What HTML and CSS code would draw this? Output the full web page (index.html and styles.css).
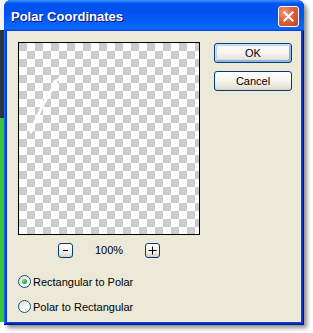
FILE: index.html
```html
<!DOCTYPE html>
<html>
<head>
<meta charset="utf-8">
<link rel="stylesheet" href="styles.css">
</head>
<body>
<div class="desk">
  <div class="window">
    <div class="titlebar">
      <span class="title">Polar Coordinates</span>
      <div class="close">
        <svg width="21" height="21" viewBox="0 0 21 21"><path d="M6.5 6.5 L14.5 14.5 M14.5 6.5 L6.5 14.5" stroke="#fff" stroke-width="2.2" stroke-linecap="square"/></svg>
      </div>
    </div>
    <div class="body">
      <div class="main">
        <div class="left">
          <div class="preview">
            <svg width="180" height="191" viewBox="0 0 180 191">
              <path d="M12 89 Q22 62 37 40" fill="none" stroke="#fff" stroke-width="2.8" stroke-linecap="round"/>
              <path d="M35 39 L43 34" fill="none" stroke="#fff" stroke-width="2.6" stroke-linecap="round"/>
            </svg>
          </div>
          <div class="zoom">
            <div class="zbtn"><svg width="13" height="12" viewBox="0 0 13 12"><path d="M4 6.5 H9" stroke="#000" stroke-width="1"/></svg></div>
            <span class="pct">100%</span>
            <div class="zbtn"><svg width="13" height="12" viewBox="0 0 13 12"><path d="M2.5 6.5 H10.5 M6.5 2.5 V10.5" stroke="#000" stroke-width="1"/></svg></div>
          </div>
        </div>
        <div class="buttons">
          <div class="btn">OK</div>
          <div class="btn">Cancel</div>
        </div>
      </div>
      <div class="radios">
        <div class="radio"><span class="circle checked"></span><span>Rectangular to Polar</span></div>
        <div class="radio"><span class="circle"></span><span>Polar to Rectangular</span></div>
      </div>
    </div>
  </div>
</div>
</body>
</html>
```
FILE: styles.css
```css
html, body {
  margin: 0;
  padding: 0;
  background: #fff;
}
.desk {
  width: 313px;
  height: 333px;
  overflow: hidden;
  background:
    linear-gradient(to bottom, #f4f4f4 0 30px, #2e3640 30px 118px, #3cc43c 118px 322px, transparent 322px) 0 0 / 4px 100% no-repeat,
    #fff;
  font-family: "Liberation Sans", Arial, sans-serif;
  font-size: 11px;
  color: #000;
}
.window {
  margin-left: 4px;
  width: 300px;
  height: 325px;
  box-sizing: border-box;
  padding: 0 3px 3px 3px;
  border-radius: 7px 7px 0 0;
  background: #0b3fd8;
  box-shadow: inset -1px -1px #00138c, inset 1px 0 #166aee, inset -2px -2px #0a2fc8,
    3px 3px 4px rgba(0,0,0,0.45);
  display: flex;
  flex-direction: column;
}
.titlebar {
  height: 31px;
  margin: 0 -3px;
  border-radius: 7px 7px 0 0;
  background: linear-gradient(180deg, #3c8fff 0, #0a62f0 3px, #0053ee 9%, #0050ee 40%, #0863f5 80%, #0a66ff 92%, #0553f0 97%, #003dd7 100%);
  display: flex;
  align-items: center;
  padding: 0 5px 0 7px;
  flex-shrink: 0;
}
.title {
  flex: 1;
  color: #fff;
  font-weight: bold;
  font-size: 13px;
  text-shadow: 1px 1px #0f1089;
  margin-top: 1px;
}
.close {
  width: 21px;
  height: 21px;
  box-sizing: border-box;
  border: 1px solid #fff;
  border-radius: 3px;
  background: radial-gradient(circle at 30% 30%, #f09a7a 0, #e0603c 45%, #c8401c 100%);
  display: flex;
  margin-top: 1px;
}
.close svg {
  margin: -1px;
}
.body {
  flex: 1;
  background: #ece9d8;
  padding: 11px 11px 0 11px;
  display: flex;
  flex-direction: column;
}
.main {
  display: flex;
  align-items: flex-start;
}
.left {
  display: flex;
  flex-direction: column;
}
.preview {
  width: 182px;
  height: 193px;
  box-sizing: border-box;
  border: 1px solid #000;
  background: conic-gradient(#fff 25%, #cccccc 0 50%, #fff 0 75%, #cccccc 0) 0 0 / 16px 16px;
}
.preview svg {
  display: block;
}
.zoom {
  margin-top: 8px;
  display: flex;
  align-items: center;
  justify-content: center;
  gap: 22px;
  height: 15px;
}
.zbtn {
  width: 15px;
  height: 15px;
  box-sizing: border-box;
  border: 1px solid #003c74;
  border-radius: 3px;
  background: linear-gradient(180deg, #fff 0, #f0f0ea 60%, #d6d0c5 100%);
  display: flex;
}
.pct {
  line-height: 15px;
}
.buttons {
  margin-left: 14px;
  margin-top: 1px;
  display: flex;
  flex-direction: column;
  gap: 8px;
}
.btn {
  width: 78px;
  height: 20px;
  box-sizing: border-box;
  border: 1px solid #003c74;
  border-radius: 3px;
  background: linear-gradient(180deg, #fff 0, #f5f4ef 50%, #e6e3da 85%, #d6d0c5 100%);
  display: flex;
  align-items: center;
  justify-content: center;
  font-size: 11px;
}
.btn:first-child {
  box-shadow: inset 1px 1px #cee7ff, inset -1px -1px #98b8ea, inset 2px 2px #bcd4f6, inset -2px -2px #89ade4;
}
.radios {
  margin-top: 17px;
  display: flex;
  flex-direction: column;
  gap: 12px;
}
.radio {
  display: flex;
  align-items: center;
  gap: 2px;
  height: 13px;
}
.circle {
  width: 13px;
  height: 13px;
  box-sizing: border-box;
  border: 1px solid #1c5180;
  border-radius: 50%;
  background: linear-gradient(135deg, #dcdcd7 0, #fff 80%);
  display: flex;
  align-items: center;
  justify-content: center;
}
.circle.checked::after {
  content: "";
  width: 5px;
  height: 5px;
  border-radius: 50%;
  background: radial-gradient(circle at 35% 35%, #7be27b 0, #2fa82f 60%, #178f17 100%);
}
```
